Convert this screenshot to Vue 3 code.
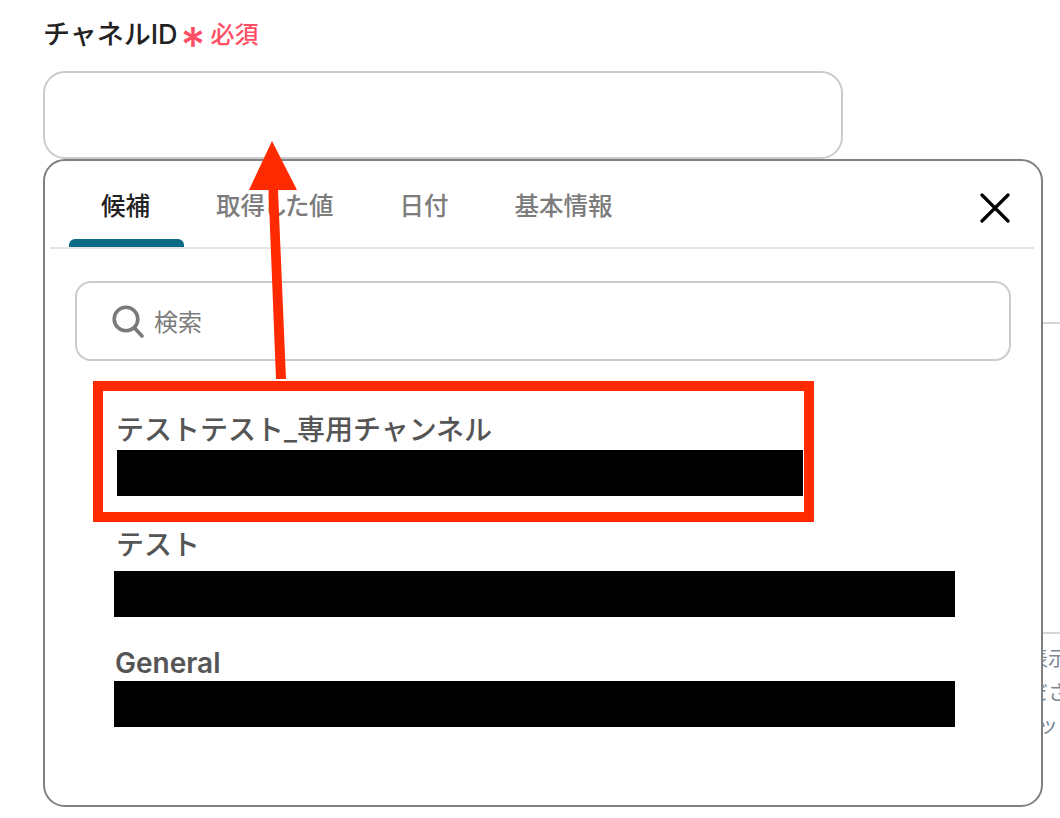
<script setup>
const tabs = [
  { label: '候補', active: true },
  { label: '取得した値' },
  { label: '日付' },
  { label: '基本情報' },
]
const options = [
  { name: 'テストテスト_専用チャンネル', cls: 'first' },
  { name: 'テスト', cls: 'second' },
  { name: 'General', cls: 'third' },
]
</script>

<template>
  <div class="page">
    <div class="behind">
      <div class="behind-line line-one"></div>
      <div class="behind-line line-two"></div>
      <p class="behind-text text-one">表示</p>
      <p class="behind-text text-two">ださ</p>
      <p class="behind-text text-three">ッ</p>
    </div>

    <div class="field">
      <div class="label-row">
        <span class="label">チャネルID</span>
        <span class="star">*</span>
        <span class="required">必須</span>
      </div>
      <div class="input"></div>
    </div>

    <div class="popup">
      <div class="tabs-row">
        <div class="tabs">
          <div v-for="t in tabs" :key="t.label" class="tab" :class="{ active: t.active }">{{ t.label }}</div>
        </div>
        <svg class="close" width="30" height="30" viewBox="0 0 30 30" aria-hidden="true">
          <path d="M2 2 L28 28 M28 2 L2 28" stroke="#000" stroke-width="3.2" stroke-linecap="round" fill="none" />
        </svg>
      </div>
      <div class="search">
        <svg width="32" height="33" viewBox="0 0 32 33" aria-hidden="true">
          <circle cx="14" cy="14" r="11.8" stroke="#7a7a7a" stroke-width="3.6" fill="none" />
          <path d="M22.5 23 L30 31" stroke="#7a7a7a" stroke-width="3.6" stroke-linecap="round" fill="none" />
        </svg>
        <span class="search-text">検索</span>
      </div>
      <div class="options">
        <div v-for="o in options" :key="o.name" class="option" :class="o.cls">
          <div class="option-name">{{ o.name }}</div>
          <div class="redacted"></div>
        </div>
      </div>
    </div>

    <div class="highlight"></div>
    <svg class="arrow" width="60" height="250" viewBox="0 0 60 250" aria-hidden="true">
      <path d="M32 0 L57 49 L38 49 L46 238 L36 238 L28.5 49 L9 49 Z" fill="#ff2a00" />
    </svg>
  </div>
</template>

<style>
html, body { margin: 0; background: #fff; }
</style>

<style scoped>
.page {
  position: relative;
  width: 1060px;
  height: 818px;
  overflow: hidden;
  background: #fff;
  font-family: "Inter", "Noto Sans CJK JP", sans-serif;
  box-sizing: border-box;
  padding: 19px 0 0 43px;
}
.behind { position: absolute; inset: 0; }
.behind-line { position: absolute; left: 1040px; width: 20px; height: 2px; background: #d6d6d6; }
.line-one { top: 322px; }
.line-two { top: 632px; }
.behind-text {
  position: absolute;
  left: 1028px;
  margin: 0;
  font-size: 20px;
  line-height: 28px;
  color: #7b8794;
  white-space: nowrap;
}
.text-one { top: 645px; }
.text-two { top: 679px; }
.text-three { top: 712px; left: 1038px; }
.field { width: 800px; position: relative; }
.label-row { display: flex; align-items: center; height: 32px; }
.label { font-size: 27px; line-height: 32px; font-weight: 500; color: #222; }
.star {
  font-size: 48px;
  line-height: 32px;
  height: 32px;
  margin-left: 3px;
  width: 21px;
  color: #ff4d63;
  font-weight: 500;
  padding-top: 10px;
  box-sizing: border-box;
}
.required { font-size: 24px; line-height: 32px; color: #ff4d63; margin-left: 9px; font-weight: 500; }
.input {
  margin-top: 20px;
  height: 88px;
  box-sizing: border-box;
  border: 2px solid #cbcbcb;
  border-radius: 22px;
  background: #fff;
}
.popup {
  position: relative;
  width: 1000px;
  height: 648px;
  box-sizing: border-box;
  border: 2px solid #808080;
  border-radius: 22px;
  background: #fff;
}
.tabs-row {
  position: relative;
  margin: 0 7px 0 5px;
  height: 88px;
  box-sizing: border-box;
  border-bottom: 2px solid #e5e5e5;
  display: flex;
  align-items: flex-end;
  justify-content: space-between;
}
.tabs { display: flex; padding-left: 18px; gap: 0; }
.tab {
  position: relative;
  font-size: 24.5px;
  line-height: 32px;
  font-weight: 500;
  font-feature-settings: "palt";
  color: #7c7c7c;
  height: 78px;
  padding: 21px 33px 0;
  box-sizing: border-box;
  white-space: nowrap;
}
.tab.active { color: #222; }
.tab.active::after {
  content: "";
  position: absolute;
  left: 1px;
  right: -1px;
  bottom: 0;
  height: 8px;
  background: #0b6b87;
  border-radius: 6px 6px 0 0;
}
.close { margin: 0 24px 24px 0; }
.search {
  margin: 32px 30px 0 30px;
  height: 80px;
  box-sizing: border-box;
  border: 2px solid #cbcbcb;
  border-radius: 16px;
  display: flex;
  align-items: center;
  padding-left: 35px;
  gap: 10px;
}
.search-text { font-size: 24px; color: #7c7c7c; line-height: 32px; padding-top: 3px; }
.options { margin: 51px 0 0 69px; width: 841px; }
.option-name {
  font-size: 28px;
  line-height: 36px;
  font-weight: 500;
  color: #555;
  padding-left: 2px;
}
.third .option-name { font-weight: 600; padding-left: 1px; }
.redacted { height: 46px; background: #000; }
.first { margin-bottom: 31px; }
.first .redacted { width: 686px; margin-left: 3px; margin-top: 2px; }
.second { margin-bottom: 28px; }
.second .redacted { margin-top: 8px; }
.highlight {
  position: absolute;
  left: 93px;
  top: 381px;
  width: 721px;
  height: 141px;
  box-sizing: border-box;
  border: 10px solid #ff2a00;
}
.arrow { position: absolute; left: 240px; top: 141px; }
</style>
